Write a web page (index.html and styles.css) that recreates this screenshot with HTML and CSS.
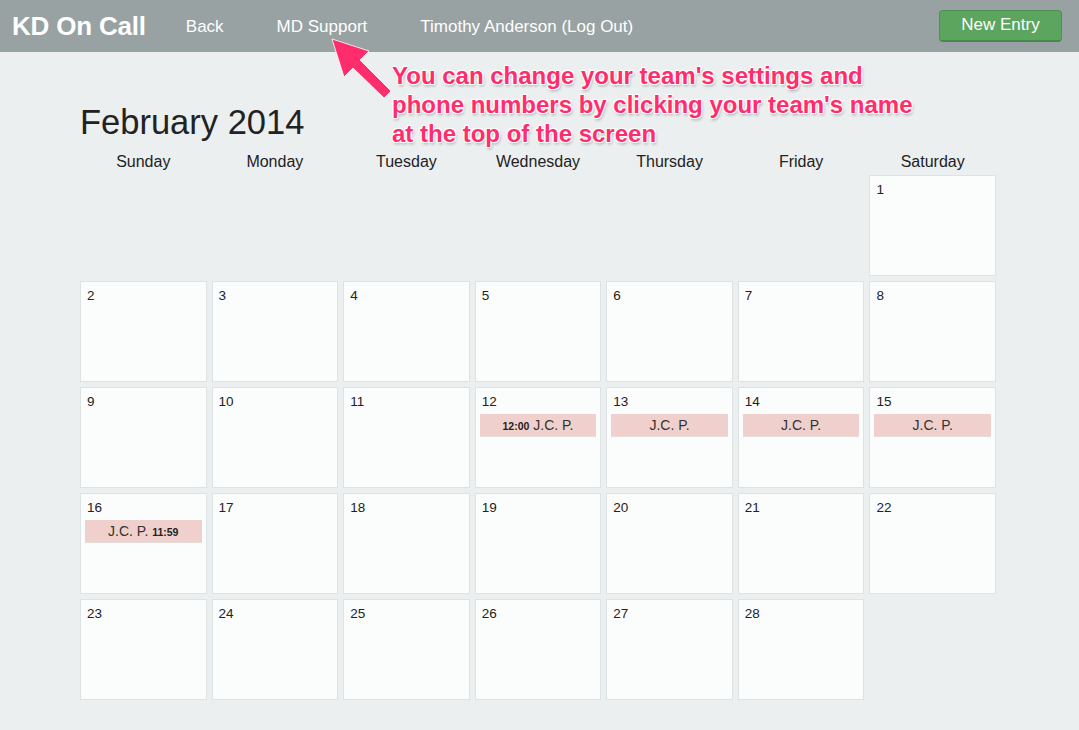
FILE: index.html
```html
<!DOCTYPE html>
<html>
<head>
<meta charset="utf-8">
<link rel="stylesheet" href="styles.css">
</head>
<body>
<header class="topbar">
  <div class="brand">KD On Call</div>
  <nav class="nav">
    <a class="nav-link">Back</a>
    <a class="nav-link">MD Support</a>
    <a class="nav-link">Timothy Anderson (Log Out)</a>
  </nav>
  <button class="new-entry">New Entry</button>
</header>

<main class="page">
  <h1 class="month">February 2014</h1>
  <div class="weekdays">
    <div>Sunday</div><div>Monday</div><div>Tuesday</div><div>Wednesday</div><div>Thursday</div><div>Friday</div><div>Saturday</div>
  </div>
  <div class="grid">
    <div class="empty"></div><div class="empty"></div><div class="empty"></div><div class="empty"></div><div class="empty"></div><div class="empty"></div>
    <div class="cell"><div class="num">1</div></div>

    <div class="cell"><div class="num">2</div></div>
    <div class="cell"><div class="num">3</div></div>
    <div class="cell"><div class="num">4</div></div>
    <div class="cell"><div class="num">5</div></div>
    <div class="cell"><div class="num">6</div></div>
    <div class="cell"><div class="num">7</div></div>
    <div class="cell"><div class="num">8</div></div>

    <div class="cell"><div class="num">9</div></div>
    <div class="cell"><div class="num">10</div></div>
    <div class="cell"><div class="num">11</div></div>
    <div class="cell"><div class="num">12</div><div class="event"><b class="time">12:00</b> J.C. P.</div></div>
    <div class="cell"><div class="num">13</div><div class="event">J.C. P.</div></div>
    <div class="cell"><div class="num">14</div><div class="event">J.C. P.</div></div>
    <div class="cell"><div class="num">15</div><div class="event">J.C. P.</div></div>

    <div class="cell"><div class="num">16</div><div class="event">J.C. P. <b class="time">11:59</b></div></div>
    <div class="cell"><div class="num">17</div></div>
    <div class="cell"><div class="num">18</div></div>
    <div class="cell"><div class="num">19</div></div>
    <div class="cell"><div class="num">20</div></div>
    <div class="cell"><div class="num">21</div></div>
    <div class="cell"><div class="num">22</div></div>

    <div class="cell"><div class="num">23</div></div>
    <div class="cell"><div class="num">24</div></div>
    <div class="cell"><div class="num">25</div></div>
    <div class="cell"><div class="num">26</div></div>
    <div class="cell"><div class="num">27</div></div>
    <div class="cell"><div class="num">28</div></div>
  </div>
</main>

<svg class="arrow" width="80" height="80" viewBox="0 0 80 80">
  <polygon points="7,4 44,16 35,25 66,56 59,63 28,33 19,42" fill="#ff2d6c" stroke="#ffffff" stroke-width="0.8" stroke-linejoin="round"/>
</svg>
<div class="callout">You can change your team's settings and<br>phone numbers by clicking your team's name<br>at the top of the screen</div>
</body>
</html>
```
FILE: styles.css
```css
* { box-sizing: border-box; }
html, body { margin: 0; padding: 0; }
body {
  background: #eceff0;
  font-family: "Liberation Sans", Arial, sans-serif;
  color: #222;
  width: 1079px;
  height: 730px;
  overflow: hidden;
  position: relative;
}
.topbar {
  height: 52px;
  background: #98a2a3;
  display: flex;
  align-items: center;
  padding: 0 17px 0 12px;
}
.brand {
  color: #fff;
  font-weight: bold;
  font-size: 26px;
  letter-spacing: -0.2px;
  margin-right: 40px;
}
.nav { display: flex; gap: 53px; flex: 1; }
.nav-link {
  color: #fff;
  font-size: 17px;
  margin-top: 1px;
}
.new-entry {
  background: #5ba55e;
  color: #fff;
  border: 1px solid #4e9151;
  border-bottom: 2px solid #468a49;
  border-radius: 4px;
  font-family: "Liberation Sans", Arial, sans-serif;
  font-size: 17px;
  width: 123px;
  height: 32px;
  padding: 0;
  margin-top: -1px;
}
.page {
  width: 916px;
  margin-left: 80px;
}
.month {
  margin: 50px 0 0 0;
  font-weight: normal;
  font-size: 34.5px;
  line-height: 40px;
  color: #222;
}
.weekdays {
  display: grid;
  grid-template-columns: repeat(7, 1fr);
  gap: 5px;
  margin-top: 10px;
  height: 23px;
  font-size: 16px;
  line-height: 20px;
  text-align: center;
}
.grid {
  display: grid;
  grid-template-columns: repeat(7, 1fr);
  grid-auto-rows: 101px;
  gap: 5px;
}
.cell {
  background: #fbfcfc;
  border: 1px solid #dde2e4;
  padding: 6px 4px 0 4px;
}
.num {
  font-size: 13.5px;
  line-height: 16px;
  padding-left: 2px;
  color: #222;
}
.event {
  margin-top: 4px;
  height: 23px;
  background: #f0d0cc;
  border-bottom: 1px solid #e8dcda;
  text-align: center;
  font-size: 14px;
  line-height: 23px;
  color: #333;
}
.time {
  font-size: 10.5px;
  font-weight: bold;
  color: #222;
}
.arrow {
  position: absolute;
  left: 325px;
  top: 35px;
}
.callout {
  position: absolute;
  left: 392px;
  top: 61px;
  font-family: "Liberation Sans", Arial, sans-serif;
  font-weight: bold;
  font-size: 24px;
  line-height: 29px;
  color: #ff2d6c;
  text-shadow: 0 0 1px #fff, 0 0 2px #fff, 1px 1px 1px #fff, -1px -1px 1px #fff, 1px -1px 1px #fff, -1px 1px 1px #fff, 1px 2px 3px rgba(0,0,0,0.35);
}
```
